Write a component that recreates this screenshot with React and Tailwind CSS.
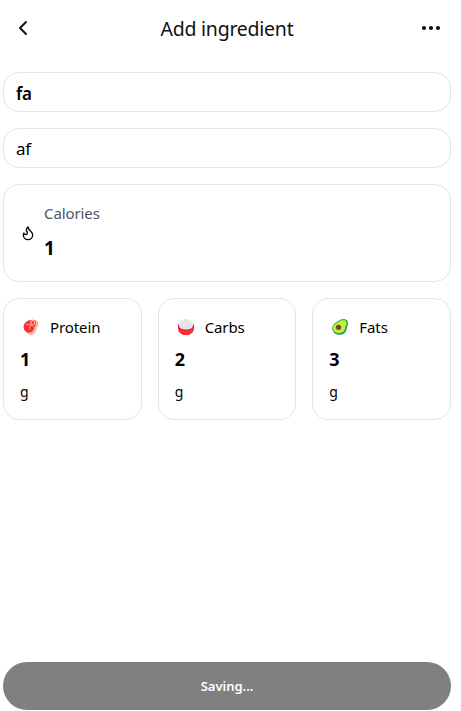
import { ChevronLeft, Ellipsis, Flame } from "lucide-react";

function MeatIcon() {
  return (
    <svg viewBox="0 0 16 16" className="size-4 shrink-0">
      <path d="M2.2 9.5C2 5.500 6 1.500 10.500 1C13.600.7 15.800 2.600 15.500 5.300C15.200 8 13.600 8.800 13 11.500C12.500 14 10.300 15.800 7.500 15.700C4.500 15.500 2.400 13.500 2.200 9.500Z" fill="#ffb3a7" />
      <path d="M.6 7.800C.6 3.800 5 .8 9.400.7C12 .6 13.400 2.300 12.900 4.500C12.400 6.700 11.500 7.500 11 9.800C10.400 12.300 8 13.900 5.500 13.600C2.500 13.300.6 10.800.6 7.800Z" fill="#f8312f" />
      <path d="M7.300 5.800L3 5.400M7.300 5.800L6.300 10.500M7.300 5.800L10.500 7.800" stroke="#ffb0a8" strokeWidth=".8" fill="none" />
      <circle cx="9.800" cy="3.700" r="2" fill="#f8312f" stroke="#ffb7b0" strokeWidth="1.200" />
    </svg>
  );
}

function RiceIcon() {
  return (
    <svg viewBox="0 0 16 16" className="size-4 shrink-0">
      <path d="M0 6.500H16V9C16 13 13.500 15 11.500 15.200V16H4.500V15.200C2.500 15 0 13 0 9Z" fill="#f8312f" />
      <path d="M0 7C0 4.500 3 3 8 3S16 4.500 16 7S13 11.300 8 11.300S0 9.500 0 7Z" fill="#ca0b4a" />
      <path d="M.9 6C.9 2.300 4 0 8 0S15.100 2.300 15.100 6C15.100 9.300 12 10.600 8 10.600S.9 9.300.9 6Z" fill="#e8e8e8" />
      <path d="M4 3.500l1 .5M7 2l1 .3M11 3l-.8.6M3 6.500l1 .2M6.500 5.500l.9-.4M9.500 6l.8.5M12 6l.8-.4M5.500 8.300l.8.2M9 8.500l.9-.2" stroke="#c2b8c7" strokeWidth=".7" />
    </svg>
  );
}

function AvocadoIcon() {
  return (
    <svg viewBox="0 0 16 16" className="size-4 shrink-0">
      <path d="M1.200 6.500C2.800 3.500 5 3.400 7 1.600C9.200-.2 13.500-.4 15 1.300C16.700 3.200 16.200 5.500 15.300 7.200C14.400 9.300 14.800 11 13.200 13.200C11 16.200 5.800 16.700 2.800 14.500C.2 12.300-.4 9.200 1.200 6.500Z" fill="#26924a" />
      <path d="M1.300 6.900C2.800 4.100 5.300 3.900 7.300 2.100C9.200.4 12.600.2 14.100 1.700C15.500 3.300 15 5.400 14.100 6.800C13.200 8.600 13.600 10.200 12.200 12.100C10 14.800 5.500 15 2.700 13C.4 11.300 0 9.200 1.300 6.900Z" fill="#c3ef3c" stroke="#44b45a" strokeWidth=".8" />
      <circle cx="6.500" cy="8.300" r="2.600" fill="#6d4534" />
    </svg>
  );
}

const macros = [
  { label: "Protein", value: 1, Icon: MeatIcon },
  { label: "Carbs", value: 2, Icon: RiceIcon },
  { label: "Fats", value: 3, Icon: AvocadoIcon },
];

export default function App() {
  return (
    <div className="h-[711px] w-full overflow-hidden bg-white pl-[3px] font-['Noto_Sans','Open_Sans',sans-serif] text-black">
      <div className="flex h-full w-[448px] flex-col">
        <header className="flex h-14 shrink-0 items-center justify-between">
          <button className="flex size-10 items-center justify-center" aria-label="Back">
            <ChevronLeft size={24} className="text-[#111]" />
          </button>
          <h1 className="pt-px text-[19.5px] leading-7 tracking-[-0.25px] text-[#111]">Add ingredient</h1>
          <button className="flex size-10 items-center justify-center" aria-label="More">
            <Ellipsis size={24} strokeWidth={2.2} className="text-[#111]" />
          </button>
        </header>

        <main className="mt-4 flex flex-col gap-4">
          <div className="flex h-10 items-center rounded-2xl border border-[#e5e5e5] px-3 pt-[3px] text-[17px] font-semibold tracking-[-0.4px]">fa</div>
          <div className="flex h-10 items-center rounded-2xl border border-[#e5e5e5] px-3 pt-0.5 text-[17px] tracking-[-0.2px]">af</div>

          <section className="flex h-[98px] items-center gap-2 rounded-2xl border border-[#e5e5e5] px-4">
            <Flame size={16} className="shrink-0" />
            <div>
              <div className="text-[15px] leading-6 tracking-[-0.1px] text-[#4a5565]">Calories</div>
              <div className="mt-[7px] mb-px text-[19px] leading-8 font-bold">1</div>
            </div>
          </section>

          <section className="grid grid-cols-3 gap-4">
            {macros.map(({ label, value, Icon }) => (
              <div key={label} className="flex h-[122px] flex-col rounded-2xl border border-[#e5e5e5] px-4 pt-4">
                <div className="flex h-6 items-center gap-[11px] pl-[3px]">
                  <Icon />
                  <span className="text-[15px] leading-6 tracking-[-0.1px]">{label}</span>
                </div>
                <div className="mt-1.5 text-[18px] leading-7 font-bold">{value}</div>
                <div className="mt-[7px] text-[14px] leading-6">g</div>
              </div>
            ))}
          </section>
        </main>

        <button className="mt-auto mb-px flex h-12 shrink-0 items-center justify-center rounded-full bg-[#808080] pt-0.5 text-[13px] font-semibold text-white">
          Saving...
        </button>
      </div>
    </div>
  );
}
